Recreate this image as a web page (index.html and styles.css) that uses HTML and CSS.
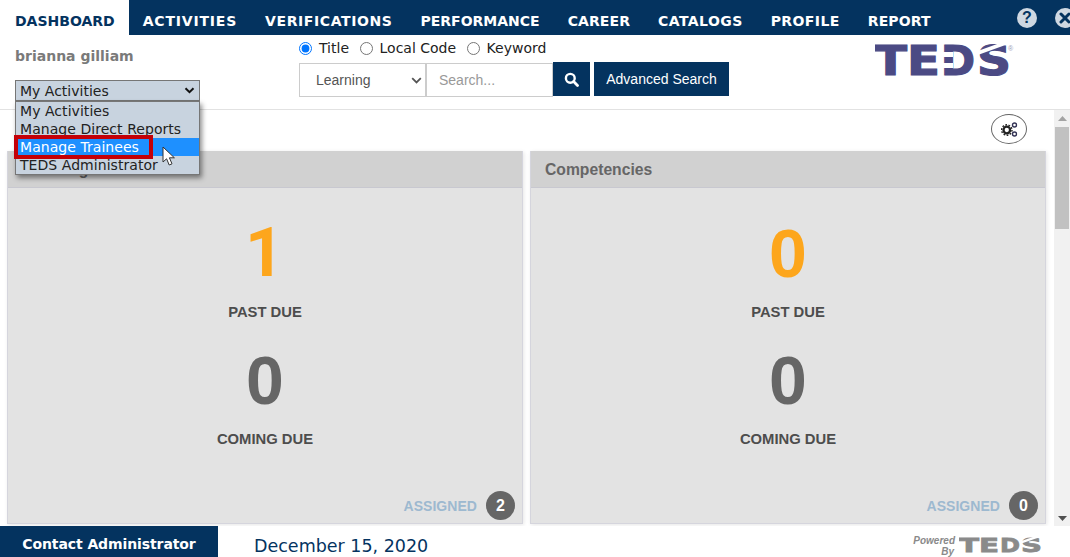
FILE: index.html
```html
<!DOCTYPE html>
<html lang="en">
<head>
<meta charset="utf-8">
<title>TEDS Dashboard</title>
<link rel="stylesheet" href="styles.css">
</head>
<body>
<div class="page">
  <nav class="nav">
    <a class="tab active">DASHBOARD</a>
    <a class="tab ls-8">ACTIVITIES</a>
    <a class="tab ls-6">VERIFICATIONS</a>
    <a class="tab">PERFORMANCE</a>
    <a class="tab ls-2">CAREER</a>
    <a class="tab ls-5">CATALOGS</a>
    <a class="tab ls-5">PROFILE</a>
    <a class="tab ls-2">REPORT</a>
    <span class="nav-icons">
      <span class="round-icon">?</span>
      <span class="round-icon close">
        <svg width="12" height="12" viewBox="0 0 12 12"><path d="M2 2l8 8M10 2l-8 8" stroke="#04335f" stroke-width="3" stroke-linecap="round"/></svg>
      </span>
    </span>
  </nav>

  <header class="head">
    <div class="user">
      <div class="user-name">brianna gilliam</div>
      <div class="role-select">
        <span>My Activities</span>
        <svg width="11" height="7" viewBox="0 0 11 7"><path d="M1.5 1.2l4 4 4-4" fill="none" stroke="#111" stroke-width="2"/></svg>
      </div>
    </div>
    <div class="search">
      <div class="radios">
        <label class="radio"><input type="radio" name="scope" checked>Title</label>
        <label class="radio"><input type="radio" name="scope">Local Code</label>
        <label class="radio"><input type="radio" name="scope">Keyword</label>
      </div>
      <div class="search-row">
        <div class="field kind">
          <span>Learning</span>
          <svg width="11" height="7" viewBox="0 0 11 7"><path d="M1.2 1.2l4.3 4.3 4.3-4.3" fill="none" stroke="#555" stroke-width="1.8"/></svg>
        </div>
        <div class="field query">Search...</div>
        <button class="btn btn-icon" type="button">
          <svg width="15" height="15" viewBox="0 0 15 15"><circle cx="6.3" cy="6.3" r="4.4" fill="none" stroke="#fff" stroke-width="2.4"/><path d="M9.6 9.6l3.9 3.9" stroke="#fff" stroke-width="2.8" stroke-linecap="round"/></svg>
        </button>
        <button class="btn btn-adv" type="button">Advanced Search</button>
      </div>
    </div>
    <div class="logo">
      <svg width="140" height="50" viewBox="0 0 140 50">
        <text class="logo-text" x="-1" y="40" textLength="33" lengthAdjust="spacingAndGlyphs">T</text>
        <text class="logo-text" x="32" y="40" textLength="33" lengthAdjust="spacingAndGlyphs">E</text>
        <text class="logo-text" x="66" y="40" textLength="34" lengthAdjust="spacingAndGlyphs">D</text>
        <text class="logo-text" x="102" y="40" textLength="34" lengthAdjust="spacingAndGlyphs">S</text>
        <path d="M65 17h13v5H65zM65 28h13v5H65z" fill="#fff"/>
        <path d="M100 21l36-13v-4l-36 13z" fill="#fff"/>
        <text class="logo-reg" x="133" y="16">®</text>
      </svg>
    </div>
  </header>

  <div class="menu">
    <div class="menu-item">My Activities</div>
    <div class="menu-item">Manage Direct Reports</div>
    <div class="menu-item selected"><span class="highlight">Manage Trainees</span></div>
    <div class="menu-item">TEDS Administrator</div>
  </div>
  <svg class="cursor" width="15" height="21" viewBox="0 0 15 21"><path d="M1 1v15l3.6-3.2 2.6 6.2 2.8-1.2-2.6-6h5z" fill="#fff" stroke="#333" stroke-width="1"/></svg>

  <main class="main">
    <div class="content">
      <div class="tools">
        <button class="gear" type="button">
          <svg width="17" height="15" viewBox="0 0 17 15">
            <circle cx="5.8" cy="8" r="3.3" fill="none" stroke="#222" stroke-width="2.3"/>
            <circle cx="5.8" cy="8" r="5.2" fill="none" stroke="#222" stroke-width="1.4" stroke-dasharray="1.7 1.5"/>
            <circle cx="13.5" cy="3" r="2" fill="none" stroke="#335" stroke-width="1.4"/>
            <circle cx="13.5" cy="12" r="2" fill="none" stroke="#335" stroke-width="1.4"/>
          </svg>
        </button>
      </div>
      <div class="cards">
        <section class="card">
          <h2 class="card-title">Learning</h2>
          <div class="card-body">
            <div class="num due one">1</div>
            <div class="label">PAST DUE</div>
            <div class="num">0</div>
            <div class="label">COMING DUE</div>
          </div>
          <div class="assigned"><span>ASSIGNED</span><b class="badge">2</b></div>
        </section>
        <section class="card">
          <h2 class="card-title">Competencies</h2>
          <div class="card-body">
            <div class="num due">0</div>
            <div class="label">PAST DUE</div>
            <div class="num">0</div>
            <div class="label">COMING DUE</div>
          </div>
          <div class="assigned"><span>ASSIGNED</span><b class="badge">0</b></div>
        </section>
      </div>
    </div>
    <div class="scrollbar">
      <svg class="arrow" width="9" height="5" viewBox="0 0 9 5"><path d="M4.5 0l4.5 5H0z" fill="#a3a3a3"/></svg>
      <div class="thumb"></div>
      <svg class="arrow down" width="9" height="5" viewBox="0 0 9 5"><path d="M0 0h9L4.5 5z" fill="#505050"/></svg>
    </div>
  </main>

  <footer class="foot">
    <a class="contact">Contact Administrator</a>
    <div class="date">December 15, 2020</div>
    <div class="powered">
      <span class="powered-by">Powered<br><i class="by">By</i></span>
      <svg width="86" height="26" viewBox="0 0 86 26">
        <text class="logo-text small" x="0" y="21" textLength="20" lengthAdjust="spacingAndGlyphs">T</text>
        <text class="logo-text small" x="20" y="21" textLength="20" lengthAdjust="spacingAndGlyphs">E</text>
        <text class="logo-text small" x="41" y="21" textLength="20" lengthAdjust="spacingAndGlyphs">D</text>
        <text class="logo-text small" x="62" y="21" textLength="21" lengthAdjust="spacingAndGlyphs">S</text>
        <path d="M61 13l23-8v-2.5l-23 8z" fill="#fff"/>
      </svg>
    </div>
  </footer>
</div>
</body>
</html>
```

FILE: styles.css
```css
* { box-sizing: border-box; }
html, body { margin: 0; height: 100%; overflow: hidden; background: #fff; }
.page { position: relative; width: 1070px; height: 557px; display: flex; flex-direction: column; font-family: "DejaVu Sans", Verdana, sans-serif; overflow: hidden; }

.nav { height: 35px; flex: none; background: #04335f; display: flex; align-items: stretch; }
.tab { display: flex; align-items: center; padding: 6px 14px 0; color: #fff; font-size: 14px; font-weight: 700; line-height: 1; }
.tab.active { background: #fff; color: #04335f; padding-left: 15px; }
.ls-8 { letter-spacing: .8px; }
.ls-6 { letter-spacing: .6px; }
.ls-5 { letter-spacing: .42px; }
.ls-2 { letter-spacing: .1px; }
.nav-icons { margin-left: auto; margin-right: -5px; display: flex; align-items: center; gap: 18px; }
.round-icon { width: 20px; height: 20px; border-radius: 50%; background: #cfd8e2; color: #04335f; display: flex; align-items: center; justify-content: center; font: 700 16px "Liberation Sans", sans-serif; }

.head { height: 75px; flex: none; display: flex; border-bottom: 1px solid #e2e2e2; }
.user { width: 299px; padding: 12px 0 0 15px; flex: none; }
.user-name { font-size: 14px; font-weight: 700; color: #7a7a7a; line-height: 18px; }
.role-select { margin-top: 15px; width: 185px; height: 21px; border: 1px solid #767676; background: #c8d3df; color: #222; display: flex; align-items: center; justify-content: space-between; padding: 0 4px; font-size: 14px; }
.search { width: 430px; flex: none; padding-top: 3px; }
.radios { height: 20px; display: flex; align-items: center; gap: 10.5px; }
.radio { display: flex; align-items: center; color: #222; font-size: 14px; }
.radio input { margin: 0 7px 0 0; width: 13px; height: 13px; accent-color: #0075ff; }
.search-row { margin-top: 4px; display: flex; align-items: flex-start; }
.field { height: 34px; margin-top: 1px; border: 1px solid #ccc; display: flex; align-items: center; background: #fff; font-family: "Liberation Sans", sans-serif; font-size: 14px; }
.kind { width: 128px; padding: 0 3px 0 16px; justify-content: space-between; color: #555; border-right-width: 2px; }
.query { width: 126px; padding-left: 12px; color: #999; border-left: 0; }
.btn { border: 0; padding: 0; height: 34px; background: #04335f; color: #fff; font: 14px "Liberation Sans", sans-serif; display: flex; align-items: center; justify-content: center; }
.btn-icon { width: 37px; }
.btn-adv { width: 135px; margin-left: 4px; }
.logo { margin-left: 146px; height: 50px; }
.logo-text { font: 700 41px "DejaVu Sans", sans-serif; fill: #4b4a84; stroke: #4b4a84; stroke-width: 1.2; }
.logo-text.small { font-size: 19.5px; fill: #8a8a8a; stroke: #8a8a8a; stroke-width: .8; }
.logo-reg { font: 7px "Liberation Sans", sans-serif; fill: #9a9ab5; }

.menu { position: absolute; left: 15px; top: 101px; width: 185px; height: 74px; border: 1px solid #767676; background: #c8d3df; box-shadow: 2px 3px 5px rgba(0,0,0,.45); color: #222; font-size: 14px; letter-spacing: .05px; }
.menu-item { height: 18px; line-height: 18px; padding-left: 4px; white-space: nowrap; }
.menu-item.selected { background: #1e90ff; color: #fff; position: relative; }
.highlight { position: absolute; left: -2px; top: -3px; height: 24px; width: 139px; padding-left: 2px; border: 4px solid #c40008; line-height: 16px; }
.cursor { position: absolute; left: 162px; top: 146px; }

.main { flex: 1; min-height: 0; display: flex; }
.content { flex: 1; min-width: 0; padding: 0 8px 0 7px; }
.tools { height: 41px; display: flex; justify-content: flex-end; padding: 4px 19px 0 0; }
.gear { width: 36px; height: 30px; border: 1px solid #666; border-radius: 50%; background: #fff; padding: 0; display: flex; align-items: center; justify-content: center; }
.cards { display: flex; gap: 7px; }
.card { width: 516px; height: 373px; background: #e3e3e3; border: 1px solid #d5d5dd; border-top: 0; box-shadow: 1px 1px 4px rgba(0,0,0,.1); display: flex; flex-direction: column; font-family: "Liberation Sans", sans-serif; }
.card-title { margin: 0; height: 37px; flex: none; background: #d1d1d1; border-bottom: 1px solid #c8c8d0; color: #666; font-size: 15.7px; font-weight: 700; line-height: 38px; padding-left: 14px; }
.card-body { flex: 1; padding-top: 29px; text-align: center; }
.num { height: 72px; line-height: 72px; font-size: 68px; font-weight: 700; color: #666; }
.num.due { color: #fda61c; }
.num.one { font-family: Roboto, sans-serif; padding-right: 1px; }
.label { height: 55px; padding-top: 15px; line-height: 16px; font-size: 14.8px; font-weight: 700; color: #4d4d4d; }
.assigned { height: 35px; flex: none; display: flex; align-items: center; justify-content: flex-end; gap: 9px; padding: 0 7px 0 0; color: #9db9d0; font-size: 14px; font-weight: 700; letter-spacing: .05px; }
.badge { width: 29px; height: 29px; border-radius: 50%; background: #666; color: #fff; font-size: 16px; letter-spacing: 0; display: flex; align-items: center; justify-content: center; }

.scrollbar { width: 16px; flex: none; background: #f1f1f1; position: relative; display: flex; flex-direction: column; align-items: center; padding-top: 6px; }
.arrow { flex: none; }
.thumb { width: 14px; height: 102px; margin-top: 6px; background: #c1c1c1; }
.arrow.down { margin-top: auto; margin-bottom: 5px; }

.foot { height: 31px; flex: none; display: flex; align-items: stretch; background: #fff; }
.contact { width: 218px; background: #04335f; color: #fff; font-size: 14px; font-weight: 700; letter-spacing: -.1px; padding-top: 5px; display: flex; align-items: center; justify-content: center; }
.date { margin-left: 36px; color: #04335f; font-size: 17.5px; line-height: 40px; }
.powered { margin-left: auto; margin-right: 25px; display: flex; align-items: flex-start; gap: 4px; padding-top: 5px; }
.powered-by { font: italic 700 10px/11px "Liberation Sans", sans-serif; color: #8a8a8a; text-align: right; margin-top: 4px; }
.by { margin-right: 1px; }
```
